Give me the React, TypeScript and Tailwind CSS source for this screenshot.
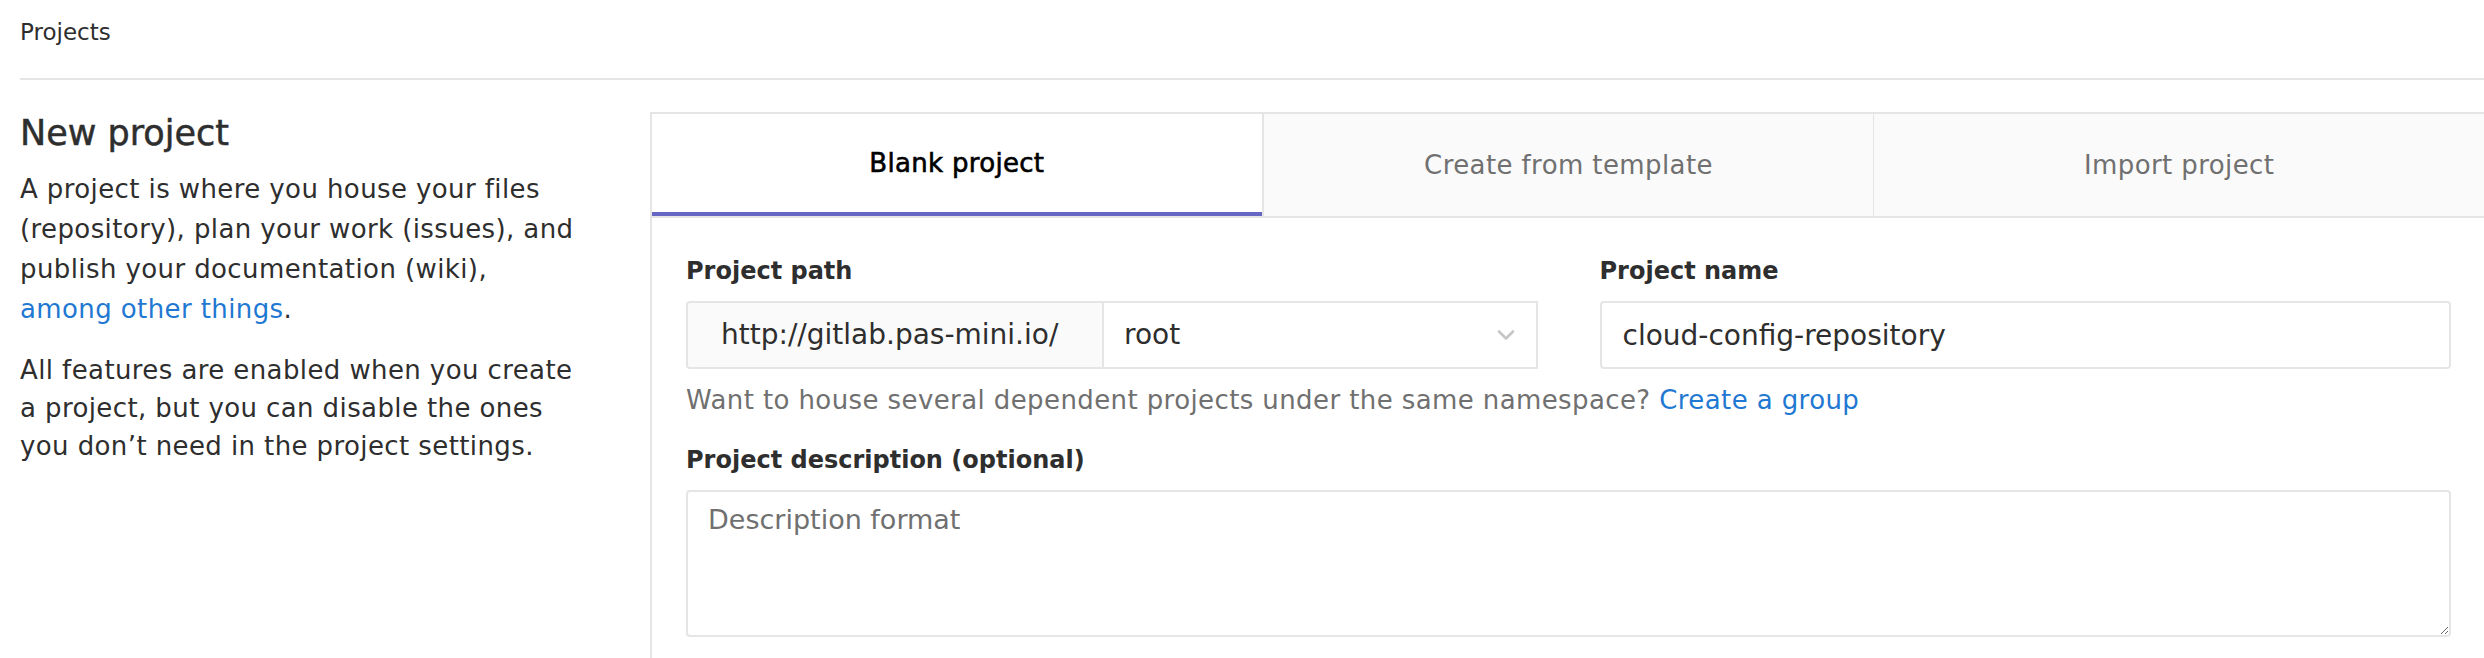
import React from "react";

function Chevron() {
  return (
    <svg width="18" height="12" viewBox="0 0 18 12" fill="none">
      <path d="M2 2.5 L9 9.5 L16 2.5" stroke="#c6c6c6" strokeWidth="2.6" strokeLinecap="round" strokeLinejoin="round" />
    </svg>
  );
}

export default function App() {
  return (
    <div className="w-[2484px] h-[658px] overflow-hidden bg-white font-['DejaVu_Sans',sans-serif] text-[#2e2e2e]">
      <div className="ml-[20px] h-[80px] pt-[12px] border-b-2 border-[#e5e5e5] text-[23px] leading-[40px]">
        Projects
      </div>

      <div className="flex pt-[32px] pl-[20px]">
        <div className="w-[630px] shrink-0 pr-[30px]">
          <h4 className="text-[35px] leading-[42px] [-webkit-text-stroke:0.5px_#2e2e2e]">New project</h4>
          <p className="mt-[15px] text-[26px] leading-[40px] tracking-[0.4px]">
            A project is where you house your files
            <br />
            (repository), plan your work (issues), and
            <br />
            publish your documentation (wiki),
            <br />
            <a className="text-[#1f78d1]">among other things</a>.
          </p>
          <p className="mt-[22px] text-[26px] leading-[38px] tracking-[0.4px]">
            All features are enabled when you create
            <br />
            a project, but you can disable the ones
            <br />
            you don’t need in the project settings.
          </p>
        </div>

        <div className="flex-1 border-l-2 border-t-2 border-[#e5e5e5] h-[546px]">
          <div className="flex h-[104px] border-b-2 border-[#e5e5e5]">
            <div className="flex-1 flex items-center justify-center bg-white border-b-4 border-[#6666c4] text-[26px] tracking-[0.3px] text-black [-webkit-text-stroke:0.6px_#000]">
              Blank project
            </div>
            <div className="flex-1 flex items-center justify-center bg-[#fafafa] border-l-2 border-[#e5e5e5] text-[26px] tracking-[0.4px] text-[#707070]">
              Create from template
            </div>
            <div className="flex-1 flex items-center justify-center bg-[#fafafa] border-l border-[#e5e5e5] text-[26px] tracking-[0.4px] text-[#707070]">
              Import project
            </div>
          </div>

          <div className="pt-[33px] pl-[34px] pr-[33px]">
            <div className="grid grid-cols-2 gap-x-[62px]">
              <div>
                <div className="text-[24px] font-bold leading-[40px] mb-[10px]">Project path</div>
                <div className="flex h-[68px]">
                  <div className="w-[418px] shrink-0 flex items-center px-[33px] bg-[#fafafa] border-2 border-[#e5e5e5] rounded-l-[4px] text-[28px]">
                    http://gitlab.pas-mini.io/
                  </div>
                  <div className="flex-1 flex items-center justify-between pl-[20px] pr-[21px] border-2 border-l-0 border-[#e5e5e5] text-[28px]">
                    <span>root</span>
                    <Chevron />
                  </div>
                </div>
              </div>
              <div>
                <div className="text-[24px] font-bold leading-[40px] mb-[10px]">Project name</div>
                <input
                  defaultValue="cloud-config-repository"
                  className="w-full h-[68px] px-[21px] border-2 border-[#e5e5e5] rounded-[4px] text-[28px] text-[#2e2e2e] outline-none"
                />
              </div>
            </div>

            <p className="mt-[11px] text-[26px] leading-[40px] tracking-[0.4px] text-[#707070]">
              Want to house several dependent projects under the same namespace?{" "}
              <a className="text-[#1f78d1]">Create a group</a>
            </p>

            <div className="mt-[20px] text-[24px] font-bold leading-[40px] mb-[10px]">Project description (optional)</div>
            <textarea
              placeholder="Description format"
              className="block w-full h-[147px] px-[20px] pt-[8px] border-2 border-[#e5e5e5] rounded-[4px] text-[27px] leading-[40px] text-[#2e2e2e] placeholder:text-[#707070] outline-none"
            />
          </div>
        </div>
      </div>
    </div>
  );
}
